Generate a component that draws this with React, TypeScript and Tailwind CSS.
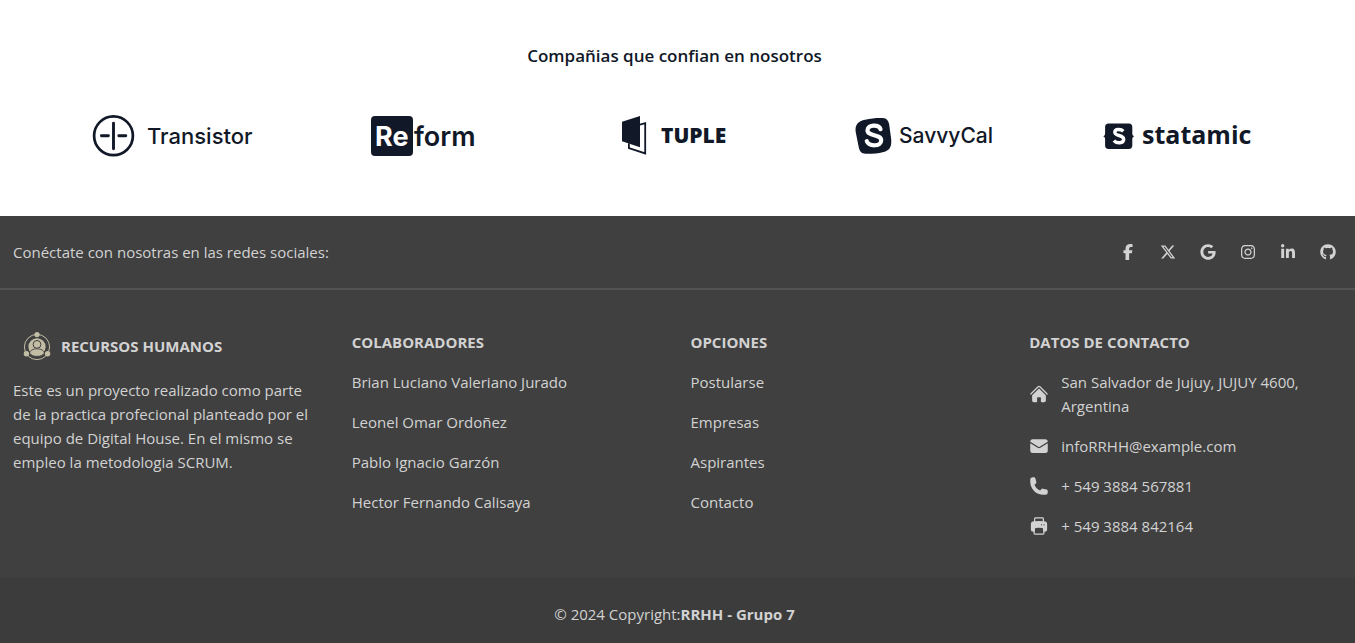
import type { ReactNode } from "react";
import { FaFacebookF, FaXTwitter, FaGoogle, FaInstagram, FaLinkedinIn, FaGithub } from "react-icons/fa6";
import { HiHome, HiEnvelope, HiPhone, HiPrinter } from "react-icons/hi2";

const logos: { name: string; art: ReactNode }[] = [
  {
    name: "Transistor",
    art: (
      <svg viewBox="0 0 158 48" className="h-12 w-[158px] overflow-visible" role="img" aria-label="Transistor" fill="none" stroke="#111827">
        <circle cx="20.5" cy="23.8" r="19.4" strokeWidth="2.7" />
        <path d="M20.5 11.2v25.6M8.4 23.8h7M25.8 23.8h7" strokeWidth="2.9" strokeLinecap="round" />
        <text x="54" y="32" fill="#111827" stroke="none" className="font-['Inter',sans-serif] text-[22px] font-medium">Transistor</text>
      </svg>
    ),
  },
  {
    name: "Reform",
    art: (
      <svg viewBox="0 0 105 48" className="h-12 w-[105px]" role="img" aria-label="Reform">
        <rect x="0" y="4" width="42" height="40" rx="4" fill="#111827" />
        <text x="4" y="34" fill="#fff" className="font-['Inter',sans-serif] text-[27px] font-bold">Re</text>
        <text x="43" y="34" fill="#111827" className="font-['Inter',sans-serif] text-[27px] font-semibold">form</text>
      </svg>
    ),
  },
  {
    name: "Tuple",
    art: (
      <svg viewBox="0 0 105 48" className="h-12 w-[105px] overflow-visible" role="img" aria-label="Tuple" fill="#111827">
        <path d="M0 9.8 18 4v31.2L0 29.2z" />
        <path d="M18 12.7l5.2-1.5v30.2L6.9 36.2v-5" fill="none" stroke="#111827" strokeWidth="1.8" />
        <text x="39" y="31" className="font-['Open_Sans',sans-serif] text-[21px] font-extrabold">TUPLE</text>
      </svg>
    ),
  },
  {
    name: "SavvyCal",
    art: (
      <svg viewBox="0 0 141 48" className="h-12 w-[141px]" role="img" aria-label="SavvyCal" fill="#111827">
        <path d="M10 7.8C17 6.2 23 5.7 28 6.1c3.5.3 5.4 2.5 6.1 6l2 14.5c.8 7.7-1.1 11.6-7.6 13.3-6 1.6-12 2.1-18 1.9-4-.2-6-2.5-6.8-6.8L.7 20C-.3 12.9 3.1 9.3 10 7.8z" />
        <path d="M25.5 17.2c-1.5-4.7-12.8-5-13 1 0 6.4 13.6 3.6 13.7 10.2.1 6.5-12.2 6.2-14.4.9" fill="none" stroke="#fff" strokeWidth="4.2" strokeLinecap="round" />
        <text x="44" y="31" className="font-['Inter',sans-serif] text-[21px] font-medium">SavvyCal</text>
      </svg>
    ),
  },
  {
    name: "Statamic",
    art: (
      <svg viewBox="0 0 147 48" className="h-12 w-[147px] overflow-visible" role="img" aria-label="Statamic" fill="#111827">
        <path d="M5.5 11.5h20.4c2.2 0 3.4 1.3 3.4 3.4v6c0 1.8.4 2.8 2 3.4-1.6.6-2 1.6-2 3.4v5.9c0 2.2-1.2 3.4-3.4 3.4H5.5c-2.2 0-3.4-1.2-3.4-3.4v-5.9c0-1.7-.4-2.8-2-3.4 1.6-.6 2-1.6 2-3.4v-6c0-2.1 1.2-3.4 3.4-3.4z" />
        <path d="M20.3 19.2c-2.2-2.3-8.4-2.5-8.5.9-.1 4.6 8.9 2.2 8.9 7.2 0 4.5-7.3 4.2-9.8 1.3" fill="none" stroke="#fff" strokeWidth="3.4" />
        <text x="39" y="32" className="font-['Open_Sans',sans-serif] text-[25px] font-bold">statamic</text>
      </svg>
    ),
  },
];

const socials = [
  { label: "Facebook", Icon: FaFacebookF },
  { label: "X", Icon: FaXTwitter },
  { label: "Google", Icon: FaGoogle },
  { label: "Instagram", Icon: FaInstagram },
  { label: "LinkedIn", Icon: FaLinkedinIn },
  { label: "GitHub", Icon: FaGithub },
];

const collaborators = [
  "Brian Luciano Valeriano Jurado",
  "Leonel Omar Ordoñez",
  "Pablo Ignacio Garzón",
  "Hector Fernando Calisaya",
];

const options = ["Postularse", "Empresas", "Aspirantes", "Contacto"];

const contacts = [
  { text: "San Salvador de Jujuy, JUJUY 4600, Argentina", Icon: HiHome },
  { text: "infoRRHH@example.com", Icon: HiEnvelope },
  { text: "+ 549 3884 567881", Icon: HiPhone },
  { text: "+ 549 3884 842164", Icon: HiPrinter },
];

function PeopleLogo() {
  return (
    <svg viewBox="0 0 32 32" className="h-8 w-8 shrink-0" aria-hidden="true" fill="#c2bda5">
      <circle cx="16" cy="17" r="12.6" fill="none" stroke="#c2bda5" strokeWidth="1" />
      <circle cx="16" cy="4.6" r="2.6" />
      <circle cx="5.4" cy="23.8" r="2.7" />
      <circle cx="26.6" cy="23.8" r="2.7" />
      <circle cx="16" cy="16.8" r="8.6" />
      <circle cx="16" cy="14.4" r="3.9" stroke="#404040" strokeWidth="1" />
      <path d="M8.8 23.4c0-3 3.2-4.6 7.2-4.6s7.2 1.6 7.2 4.6c-1.3 2-4 3-7.2 3s-5.9-1-7.2-3z" stroke="#404040" strokeWidth=".9" />
    </svg>
  );
}

function LinkColumn({ title, items }: { title: string; items: string[] }) {
  return (
    <div>
      <h3 className="mb-4 font-bold uppercase">{title}</h3>
      <ul className="space-y-4">
        {items.map((item) => (
          <li key={item}>
            <a href="#">{item}</a>
          </li>
        ))}
      </ul>
    </div>
  );
}

export default function App() {
  return (
    <div className="bg-white font-['Open_Sans',sans-serif]">
      <section className="pt-10 pr-1.5 pb-14">
        <div className="mx-auto max-w-7xl px-8">
          <h2 className="text-center text-[17px] leading-8 font-semibold text-gray-900">
            Compañias que confian en nosotros
          </h2>
          <div className="mt-10 grid grid-cols-5 items-center gap-x-10">
            {logos.map((logo) => (
              <div key={logo.name} className="flex justify-center">
                {logo.art}
              </div>
            ))}
          </div>
        </div>
      </section>

      <footer className="bg-[#404040] text-[15px] leading-6 text-[#d2d2d2]">
        <div className="flex items-center justify-between border-b-2 border-[#535353] py-6 pr-[19px] pl-[13px]">
          <span>Conéctate con nosotras en las redes sociales:</span>
          <div className="flex gap-6">
            {socials.map(({ label, Icon }) => (
              <a key={label} href="#" aria-label={label}>
                <Icon className="h-4 w-4" />
              </a>
            ))}
          </div>
        </div>

        <div className="grid grid-cols-4 gap-6 py-10 pr-[11px] pl-[13px]">
          <div>
            <h3 className="mb-4 flex items-center gap-2 pl-2 font-bold uppercase">
              <PeopleLogo />
              Recursos Humanos
            </h3>
            <p className="pr-3">
              Este es un proyecto realizado como parte de la practica profecional planteado por el equipo de Digital
              House. En el mismo se empleo la metodologia SCRUM.
            </p>
          </div>
          <LinkColumn title="Colaboradores" items={collaborators} />
          <LinkColumn title="Opciones" items={options} />
          <div>
            <h3 className="mb-4 font-bold uppercase">Datos de contacto</h3>
            <ul className="space-y-4">
              {contacts.map(({ text, Icon }) => (
                <li key={text} className="flex items-center gap-3">
                  <Icon className="h-5 w-5 shrink-0" />
                  <span>{text}</span>
                </li>
              ))}
            </ul>
          </div>
        </div>

        <div className="bg-black/5 pt-6 pr-1.5 pb-[17px] text-center">
          <span>© 2024 Copyright:</span>
          <a href="#" className="font-bold">
            RRHH - Grupo 7
          </a>
        </div>
      </footer>
    </div>
  );
}
